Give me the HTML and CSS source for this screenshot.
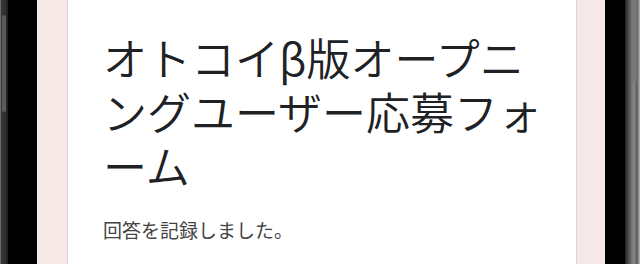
FILE: index.html
```html
<!DOCTYPE html>
<html lang="ja">
<head>
    <meta charset="UTF-8">
    <meta name="viewport" content="width=device-width, initial-scale=1.0">
    <title>オトコイβ版オープニングユーザー応募フォーム</title>
    <link rel="stylesheet" href="styles.css">
</head>
<body>

    <div class="phone">
        <div class="edge edge-left"><span class="side-btn"></span></div>
        <div class="bezel bezel-left"></div>
        <div class="screen">
            <div class="pad"></div>
            <div class="card">
                <h1 class="form-title">オトコイβ版オープニングユーザー応募フォーム</h1>
                <p class="response">回答を記録しました。</p>
            </div>
            <div class="pad pad-right"></div>
        </div>
        <div class="bezel bezel-right"></div>
        <div class="edge edge-right"><span class="side-btn"></span></div>
    </div>

</body>
</html>
```

FILE: styles.css
```css
body {
    margin: 0;
    padding: 0;
    background: #fff;
    font-family: "Noto Sans CJK JP", "Noto Sans", sans-serif;
}

.phone {
    display: flex;
    width: 640px;
    height: 264px;
    overflow: hidden;
}

.edge {
    position: relative;
    flex: none;
}

.edge-left {
    width: 8px;
    background: linear-gradient(90deg, #9a9a9a 0, #3a3a3a 1px, #2c2c2c 6px, #1a1a1a 8px);
}

.edge-right {
    width: 15px;
    background: linear-gradient(90deg, #222 0, #444 3px, #6a6a6a 6px, #8a8a8a 9px, #5a5a5a 12px, #bcbcbc 15px);
}

.side-btn {
    position: absolute;
    width: 4px;
    background: #5a5a5a;
    border-radius: 2px;
}

.edge-left .side-btn {
    left: 2px;
    top: 15px;
    height: 97px;
}

.edge-right .side-btn {
    left: 8px;
    top: -4px;
    height: 86px;
    background: #777;
}

.bezel {
    flex: none;
    background: #000;
}

.bezel-left {
    width: 29px;
}

.bezel-right {
    width: 20px;
}

.screen {
    flex: 1;
    display: flex;
    background: #f7e8e8;
}

.pad {
    width: 30px;
    flex: none;
}

.pad-right {
    width: 28px;
}

.card {
    flex: 1;
    background: #fff;
    border-left: 1px solid #dcd6d6;
    border-right: 1px solid #dcd6d6;
    padding: 30px 24px 0 35px;
}

.form-title {
    margin: 0;
    font-size: 44px;
    font-weight: 350;
    line-height: 54px;
    color: #202124;
}

.response {
    margin: 26px 0 0;
    font-size: 19px;
    line-height: 24px;
    color: #444;
}
```
